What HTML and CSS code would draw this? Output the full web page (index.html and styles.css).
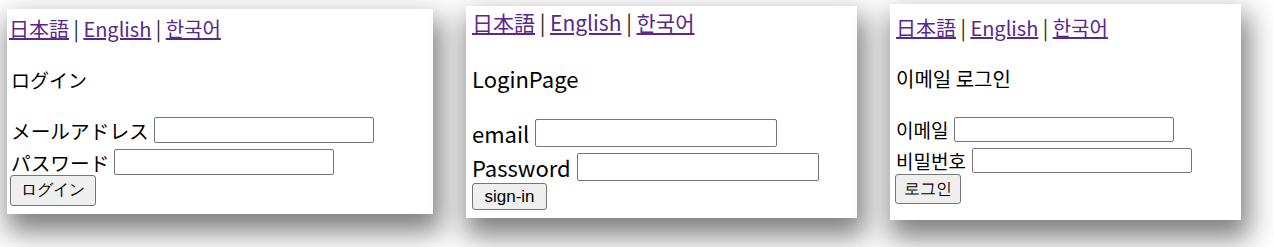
FILE: index.html
```html
<!DOCTYPE html>
<html lang="ja">
<head>
    <meta charset="UTF-8">
    <meta name="viewport" content="width=device-width, initial-scale=1.0">
    <title>ログイン</title>
    <link rel="stylesheet" href="styles.css">
</head>
<body>
    <div class="shots">
        <div class="shot shot-ja">
            <p class="langs"><a href="#">日本語</a> | <a href="#">English</a> | <a href="#">한국어</a></p>
            <p class="title">ログイン</p>
            <form>
                <div class="field"><label>メールアドレス</label><input type="text"></div>
                <div class="field"><label>パスワード</label><input type="password"></div>
                <button type="button">ログイン</button>
            </form>
        </div>
        <div class="shot shot-en">
            <p class="langs"><a href="#">日本語</a> | <a href="#">English</a> | <a href="#">한국어</a></p>
            <p class="title">LoginPage</p>
            <form>
                <div class="field"><label>email</label><input type="text"></div>
                <div class="field"><label>Password</label><input type="password"></div>
                <button type="button">sign-in</button>
            </form>
        </div>
        <div class="shot shot-ko">
            <p class="langs"><a href="#">日本語</a> | <a href="#">English</a> | <a href="#">한국어</a></p>
            <p class="title">이메일 로그인</p>
            <form>
                <div class="field"><label>이메일</label><input type="text"></div>
                <div class="field"><label>비밀번호</label><input type="password"></div>
                <button type="button">로그인</button>
            </form>
        </div>
    </div>
</body>
</html>
```

FILE: styles.css
```css
body {
    margin: 0;
    min-height: 247px;
    background: #fff;
    font-family: "Noto Sans CJK JP", sans-serif;
    color: #000;
}
.shots {
    display: flex;
    align-items: flex-start;
    height: 247px;
}
.shot {
    background: #fff;
    box-sizing: border-box;
    box-shadow: 4px 14px 26px 4px rgba(0, 0, 0, 0.5);
}
p {
    margin: 0;
}
.langs {
    font-size: 20px;
    line-height: 24px;
    color: #222;
}
.langs a {
    color: #58288c;
}
.field {
    display: flex;
    align-items: center;
    gap: 6px;
}
input {
    box-sizing: border-box;
    margin: 0;
    padding: 1px 2px;
    border: 1px solid #767676;
    border-radius: 2px;
    background: #fff;
}
button {
    display: block;
    box-sizing: border-box;
    margin: 0;
    padding: 0;
    background: #efefef;
    border: 1px solid #767676;
    border-radius: 3px;
    color: #000;
}

/* 日本語 */
.shot-ja {
    width: 426px;
    height: 205px;
    margin: 9px 0 0 7px;
    padding: 8px 0 0 2px;
}
.shot-ja .title {
    margin-top: 27px;
    padding-left: 2px;
    font-size: 19px;
    line-height: 24px;
}
.shot-ja form {
    margin-top: 24px;
    padding-left: 2px;
}
.shot-ja .field {
    height: 28px;
    margin-bottom: 4px;
    gap: 5px;
    font-size: 19.7px;
}
.shot-ja input {
    width: 220px;
    height: 26px;
}
.shot-ja button {
    width: 86px;
    height: 31px;
    margin-top: -5px;
    margin-left: -1px;
    font-size: 16px;
}

/* English */
.shot-en {
    width: 391px;
    height: 212px;
    margin: 6px 0 0 33px;
    padding: 3px 0 0 6px;
}
.shot-en .langs {
    font-size: 21px;
    line-height: 26px;
}
.shot-en .title {
    margin-top: 29px;
    font-size: 22px;
    line-height: 28px;
}
.shot-en form {
    margin-top: 26px;
}
.shot-en .field {
    height: 30px;
    margin-bottom: 4px;
    font-size: 22px;
}
.shot-en input {
    width: 242px;
    height: 28px;
}
.shot-en button {
    width: 75px;
    height: 27px;
    margin-top: -3px;
    font-family: "Liberation Sans", Arial, sans-serif;
    font-size: 17px;
}

/* 한국어 */
.shot-ko {
    width: 351px;
    height: 216px;
    margin: 4px 0 0 33px;
    padding: 12px 0 0 6px;
    font-family: "Noto Sans CJK KR", sans-serif;
}
.shot-ko .langs {
    font-family: "Noto Sans CJK JP", sans-serif;
    font-size: 20px;
}
.shot-ko .title {
    margin-top: 27px;
    font-size: 20px;
    line-height: 24px;
}
.shot-ko form {
    margin-top: 24px;
}
.shot-ko .field {
    height: 28px;
    margin-bottom: 3px;
    font-size: 19px;
}
.shot-ko input {
    width: 220px;
    height: 25px;
}
.shot-ko button {
    width: 66px;
    height: 30px;
    margin-top: -3px;
    margin-left: -1px;
    font-size: 16px;
}
```
